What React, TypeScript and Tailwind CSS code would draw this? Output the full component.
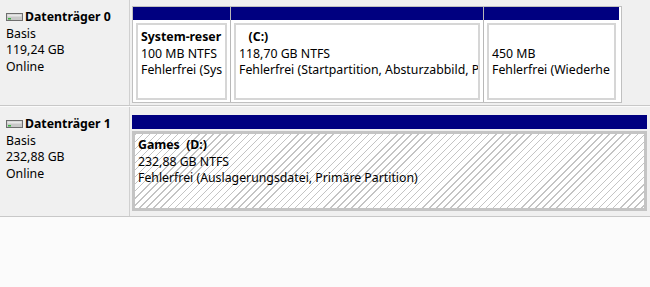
const hatch =
  "bg-[repeating-linear-gradient(135deg,#c4c4c4_0px,#c4c4c4_1px,#ffffff_1px,#ffffff_5px)]";

function DiskIcon() {
  return (
    <svg width="17" height="10" viewBox="0 0 17 10" className="mr-[2px] shrink-0">
      <rect x="0.5" y="1.5" width="16" height="7" fill="#c8c8c8" stroke="#6e6e6e" />
      <rect x="1.5" y="2.5" width="14" height="2" fill="#e8e8e8" />
      <rect x="2" y="6" width="3" height="1.5" fill="#3cb043" />
    </svg>
  );
}

function DiskLabel({ name, size }: { name: string; size: string }) {
  return (
    <div className="w-[130px] shrink-0 bg-[#f0f0f0] border-r border-[#d0d0d0] pl-[6px] pt-[9px] leading-[16.7px]">
      <div className="flex items-center font-bold">
        <DiskIcon />
        <span>{name}</span>
      </div>
      <div>Basis</div>
      <div>{size}</div>
      <div>Online</div>
    </div>
  );
}

interface Part {
  title?: string;
  size: string;
  status: string;
  width: string;
}

function Partition({ p, last }: { p: Part; last?: boolean }) {
  return (
    <div className={`flex flex-col ${p.width} ${last ? "" : "border-r border-[#b8b8b8]"}`}>
      <div className="h-[13px] bg-[#000080] shrink-0" />
      <div className="flex-1 p-[3px] pb-[2px] bg-white">
        <div className="h-full border-2 border-[#d6d6d6] bg-white px-[3px] pt-[4px] leading-[16.7px] whitespace-nowrap overflow-hidden">
          <div className="font-bold h-[16.7px] whitespace-pre">{p.title ?? ""}</div>
          <div>{p.size}</div>
          <div>{p.status}</div>
        </div>
      </div>
    </div>
  );
}

// Texts are cut where the reference cuts them
const disk0: Part[] = [
  { title: "System-reser", size: "100 MB NTFS", status: "Fehlerfrei (Sys", width: "w-[98px]" },
  { title: "   (C:)", size: "118,70 GB NTFS", status: "Fehlerfrei (Startpartition, Absturzabbild, P", width: "w-[253px]" },
  { size: "450 MB", status: "Fehlerfrei (Wiederhe", width: "w-[135px]" },
];

export default function App() {
  return (
    <div className="w-[650px] h-[287px] bg-[#fbfbfb] text-[12.3px] text-black font-['Segoe_UI','Noto_Sans',sans-serif] overflow-hidden">
      <div className="flex h-[106px] border-b border-[#c8c8c8]">
        <DiskLabel name="Datenträger 0" size="119,24 GB" />
        <div className="flex-1 bg-[#f0f0f0] pl-[2px] pt-[6px] pb-[2px]">
          <div className="flex h-full w-[490px] border border-[#c0c0c0] bg-white">
            {disk0.map((p, i) => (
              <Partition key={i} p={p} last={i === disk0.length - 1} />
            ))}
          </div>
        </div>
      </div>
      <div className="flex h-[110px] border-b border-[#c8c8c8] mt-[1px]">
        <DiskLabel name="Datenträger 1" size="232,88 GB" />
        <div className="flex-1 bg-[#f0f0f0] pl-[2px] pt-[8px] pb-[5px]">
          <div className="flex flex-col h-full w-[515px]">
            <div className="h-[14px] bg-[#000080] shrink-0" />
            <div className="flex-1 pt-[2px] bg-[#f0f0f0]">
              <div className={`h-full border-[3px] border-[#c4c4c4] ${hatch} px-[3px] pt-[3px] leading-[16.7px] whitespace-nowrap`}>
                <div className="font-bold whitespace-pre">Games  (D:)</div>
                <div>232,88 GB NTFS</div>
                <div>Fehlerfrei (Auslagerungsdatei, Primäre Partition)</div>
              </div>
            </div>
          </div>
        </div>
      </div>
    </div>
  );
}
